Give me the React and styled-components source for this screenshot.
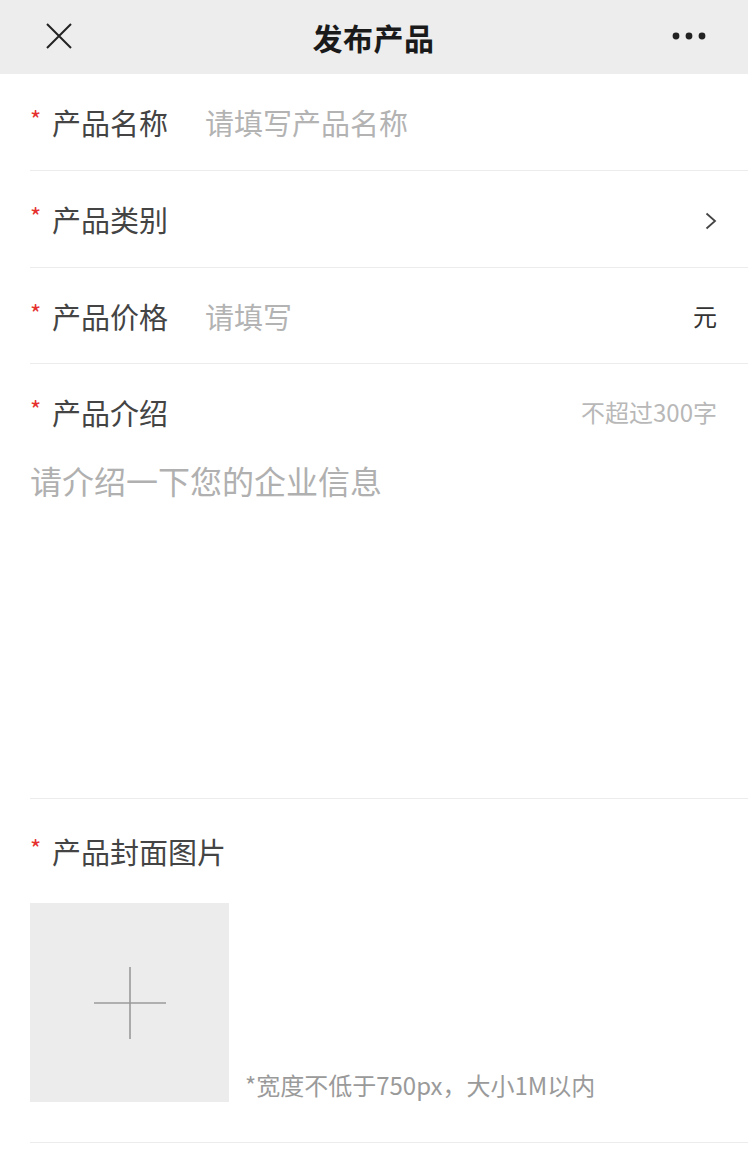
import React from "react";
import styled, { createGlobalStyle } from "styled-components";

const GlobalStyle = createGlobalStyle`
  html, body {
    margin: 0;
    padding: 0;
    background: #fff;
  }
  body {
    font-family: "Noto Sans CJK SC", "Noto Sans", sans-serif;
    color: #333;
  }
  * {
    box-sizing: border-box;
  }
`;

const Page = styled.div`
  width: 748px;
  min-height: 1150px;
  background: #fff;
`;

const Header = styled.div`
  height: 74px;
  background: #ededed;
  display: flex;
  align-items: center;
  justify-content: space-between;
  padding: 0 42px 0 43px;
`;

const Title = styled.div`
  font-size: 30px;
  font-weight: 700;
  color: #1a1a1a;
  letter-spacing: 0.5px;
`;

const IconButton = styled.div`
  width: ${(p) => p.width || 32}px;
  height: 32px;
  display: flex;
  align-items: center;
  justify-content: center;
  margin-top: -3px;
`;

const Form = styled.div`
  padding-left: 30px;
`;

const Row = styled.div`
  height: ${(p) => p.height || 97}px;
  display: flex;
  align-items: center;
  padding-right: 31px;
  border-bottom: 1px solid #ececec;
`;

const Star = styled.span`
  color: #e5302e;
  font-size: 24px;
  width: 22px;
  align-self: center;
  line-height: 1;
  margin-top: -6px;
`;

const Label = styled.span`
  font-size: 29px;
  color: #444;
  width: ${(p) => (p.wide ? "auto" : "153px")};
  white-space: nowrap;
  flex-shrink: 0;
`;

const Input = styled.input`
  flex: 1;
  border: none;
  outline: none;
  font-family: inherit;
  font-size: 29px;
  color: #333;
  background: transparent;
  padding: 0;
  min-width: 0;
  &::placeholder {
    color: #b3b3b3;
  }
`;

const Suffix = styled.span`
  font-size: 24px;
  color: #333;
  margin-left: auto;
`;

const Hint = styled.span`
  font-size: 24px;
  color: #b8b8b8;
  margin-left: auto;
`;

const Section = styled.div`
  padding-right: 31px;
  border-bottom: 1px solid #ececec;
`;

const SectionHead = styled.div`
  height: ${(p) => p.height}px;
  display: flex;
  align-items: center;
`;

const TextArea = styled.textarea`
  display: block;
  width: 100%;
  height: 339px;
  border: none;
  outline: none;
  resize: none;
  font-family: inherit;
  font-size: 32px;
  line-height: 42px;
  color: #333;
  padding: 0;
  margin: 0;
  &::placeholder {
    color: #b0b0b0;
  }
`;

const UploadRow = styled.div`
  display: flex;
  align-items: flex-end;
  gap: 16px;
  padding: 0 0 40px;
`;

const UploadBox = styled.div`
  width: 199px;
  height: 199px;
  background: #ececec;
  display: flex;
  align-items: center;
  justify-content: center;
`;

const UploadNote = styled.span`
  font-size: 24px;
  color: #9a9a9a;
  line-height: 30px;
  margin-bottom: 2px;
`;

export default function App() {
  return (
    <Page>
      <GlobalStyle />
      <Header>
        <IconButton>
          <svg width="28" height="28" viewBox="0 0 28 28">
            <path d="M2 2 L26 26 M26 2 L2 26" stroke="#222" strokeWidth="2" fill="none" />
          </svg>
        </IconButton>
        <Title>发布产品</Title>
        <IconButton width={34}>
          <svg width="34" height="8" viewBox="0 0 34 8">
            <circle cx="4" cy="4" r="3.4" fill="#222" />
            <circle cx="17" cy="4" r="3.4" fill="#222" />
            <circle cx="30" cy="4" r="3.4" fill="#222" />
          </svg>
        </IconButton>
      </Header>

      <Form>
        <Row>
          <Star>*</Star>
          <Label>产品名称</Label>
          <Input placeholder="请填写产品名称" />
        </Row>
        <Row>
          <Star>*</Star>
          <Label>产品类别</Label>
          <Suffix>
            <svg width="12" height="18" viewBox="0 0 12 18">
              <path d="M1.5 1.5 L10 9 L1.5 16.5" stroke="#444" strokeWidth="1.8" fill="none" />
            </svg>
          </Suffix>
        </Row>
        <Row height={96}>
          <Star>*</Star>
          <Label>产品价格</Label>
          <Input placeholder="请填写" />
          <Suffix>元</Suffix>
        </Row>

        <Section>
          <SectionHead height={95}>
            <Star>*</Star>
            <Label wide>产品介绍</Label>
            <Hint>不超过300字</Hint>
          </SectionHead>
          <TextArea placeholder="请介绍一下您的企业信息" />
        </Section>

        <Section>
          <SectionHead height={104}>
            <Star>*</Star>
            <Label wide>产品封面图片</Label>
          </SectionHead>
          <UploadRow>
            <UploadBox>
              <svg width="72" height="72" viewBox="0 0 72 72">
                <path d="M36 0 V72 M0 36 H72" stroke="#9a9a9a" strokeWidth="1.6" fill="none" />
              </svg>
            </UploadBox>
            <UploadNote>*宽度不低于750px，大小1M以内</UploadNote>
          </UploadRow>
        </Section>
      </Form>
    </Page>
  );
}
